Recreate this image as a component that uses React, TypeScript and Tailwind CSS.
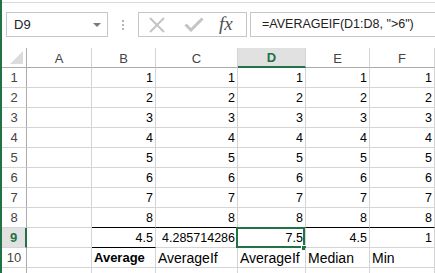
import React from "react";

const COLS = ["A", "B", "C", "D", "E", "F"];
const GRID = "grid grid-cols-[25px_65px_64px_82px_68px_64px_1fr]";

type Cell = { v: string; bold?: boolean; left?: boolean };

const rows: Cell[][] = [];
for (let i = 1; i <= 8; i++) {
  rows.push([{ v: "" }, { v: String(i) }, { v: String(i) }, { v: String(i) }, { v: String(i) }, { v: String(i) }]);
}
rows.push([{ v: "" }, { v: "4.5" }, { v: "4.285714286" }, { v: "7.5" }, { v: "4.5" }, { v: "1" }]);
rows.push([
  { v: "" },
  { v: "Average", bold: true, left: true },
  { v: "AverageIf", left: true },
  { v: "AverageIf", left: true },
  { v: "Median", left: true },
  { v: "Min", left: true },
]);
rows.push([{ v: "" }, { v: "" }, { v: "" }, { v: "" }, { v: "" }, { v: "" }]);

export default function App() {
  return (
    <div
      className="w-[435px] h-[273px] overflow-hidden bg-white flex text-[12.5px] text-black"
      style={{ fontFamily: '"Liberation Sans", Arial, sans-serif' }}
    >
      <div className="w-[2px] shrink-0 bg-[#217346]" />
      <div className="flex-1 flex flex-col min-w-0">
        {/* toolbar */}
        <div className="h-[48px] shrink-0 pt-[2px]">
          <div className="border-t border-[#d9d9d9] pt-[9px] flex items-start">
            <div className="ml-[4px] w-[102px] h-[25px] border border-[#c6c6c6] flex items-center pl-[7px] pr-[6px] text-[#222] text-[13px]">
              <span className="flex-1">D9</span>
              <span className="w-0 h-0 border-l-[4px] border-r-[4px] border-t-[4px] border-l-transparent border-r-transparent border-t-[#7a7a7a]" />
            </div>
            <div className="w-[30px] h-[25px] flex flex-col items-center justify-center gap-[2px]">
              <span className="w-[2px] h-[2px] bg-[#b5b5b5]" />
              <span className="w-[2px] h-[2px] bg-[#b5b5b5]" />
              <span className="w-[2px] h-[2px] bg-[#b5b5b5]" />
            </div>
            <div className="w-[109px] h-[25px] border border-[#c6c6c6] flex items-center">
              <svg width="18" height="16" viewBox="0 0 18 16" className="ml-[9px]">
                <path d="M2 1 L16 15 M16 1 L2 15" stroke="#c4c4c4" strokeWidth="2" fill="none" />
              </svg>
              <svg width="20" height="15" viewBox="0 0 20 15" className="ml-[18px]">
                <path d="M1.5 7.5 L7 13 L18.5 1.5" stroke="#c4c4c4" strokeWidth="3" fill="none" />
              </svg>
              <span
                className="ml-[15px] italic text-[19px] text-[#505050] leading-none -mt-[3px]"
                style={{ fontFamily: '"Liberation Serif", "Times New Roman", serif' }}
              >
                fx
              </span>
            </div>
            <div className="ml-[3px] flex-1 h-[25px] border border-r-0 border-[#c6c6c6] flex items-center pl-[11px] text-[#222]">
              =AVERAGEIF(D1:D8, "&gt;6")
            </div>
          </div>
        </div>

        {/* header row */}
        <div className={GRID}>
          <div className="h-[20px] border-r border-b border-[#ababab] relative">
            <svg width="13" height="13" viewBox="0 0 13 13" className="absolute right-[3px] bottom-[3px]">
              <polygon points="13,0 13,13 0,13" fill="#dcdcdc" />
            </svg>
          </div>
          {COLS.map((c) =>
            c === "D" ? (
              <div
                key={c}
                className="h-[20px] bg-[#e1e1e1] border-r border-[#d4d4d4] border-b-2 border-b-[#217346] flex items-center justify-center font-bold text-[#217346] text-[13px] leading-none pt-[1px]"
              >
                {c}
              </div>
            ) : (
              <div
                key={c}
                className="h-[20px] border-r border-[#d4d4d4] border-b border-b-[#ababab] flex items-center justify-center text-[#444] text-[13px] leading-none pt-[1px]"
              >
                {c}
              </div>
            )
          )}
        </div>

        {/* rows */}
        {rows.map((r, ri) => {
          const n = ri + 1;
          const sel = n === 9;
          return (
            <div key={n} className={GRID}>
              <div
                className={
                  sel
                    ? "h-[20px] bg-[#e1e1e1] border-b border-[#d4d4d4] border-r-2 border-r-[#217346] flex items-center justify-center font-bold text-[#217346] text-[13px] leading-[20px] pt-[1px]"
                    : "h-[20px] border-b border-[#d4d4d4] border-r border-r-[#ababab] flex items-center justify-center text-[#444] text-[13px] leading-[20px] pt-[1px]"
                }
              >
                {n <= 10 ? n : ""}
              </div>
              {r.map((cell, ci) => {
                const blackBottom = (n === 8 && ci >= 1) || (n === 9 && ci === 1);
                return (
                  <div
                    key={ci}
                    className={
                      "h-[20px] border-r border-[#d4d4d4] border-b whitespace-nowrap overflow-visible relative leading-[20px] pt-[1px] " +
                      (blackBottom ? "border-b-black " : "border-b-[#d4d4d4] ") +
                      (cell.left ? "text-left pl-[2px] " : "text-right pr-[2px] ") +
                      (cell.bold ? "font-bold text-[13px]" : cell.left ? "text-[14px]" : "")
                    }
                  >
                    <span className="relative -top-[1px]">{cell.v}</span>
                    {sel && ci === 3 && (
                      <div className="absolute -left-[2px] -top-[1px] w-[69px] h-[21px] border-2 border-[#217346]">
                        <span className="absolute -right-[4px] -bottom-[5px] w-[6px] h-[6px] bg-[#217346] border border-white" />
                      </div>
                    )}
                  </div>
                );
              })}
            </div>
          );
        })}
      </div>
    </div>
  );
}
